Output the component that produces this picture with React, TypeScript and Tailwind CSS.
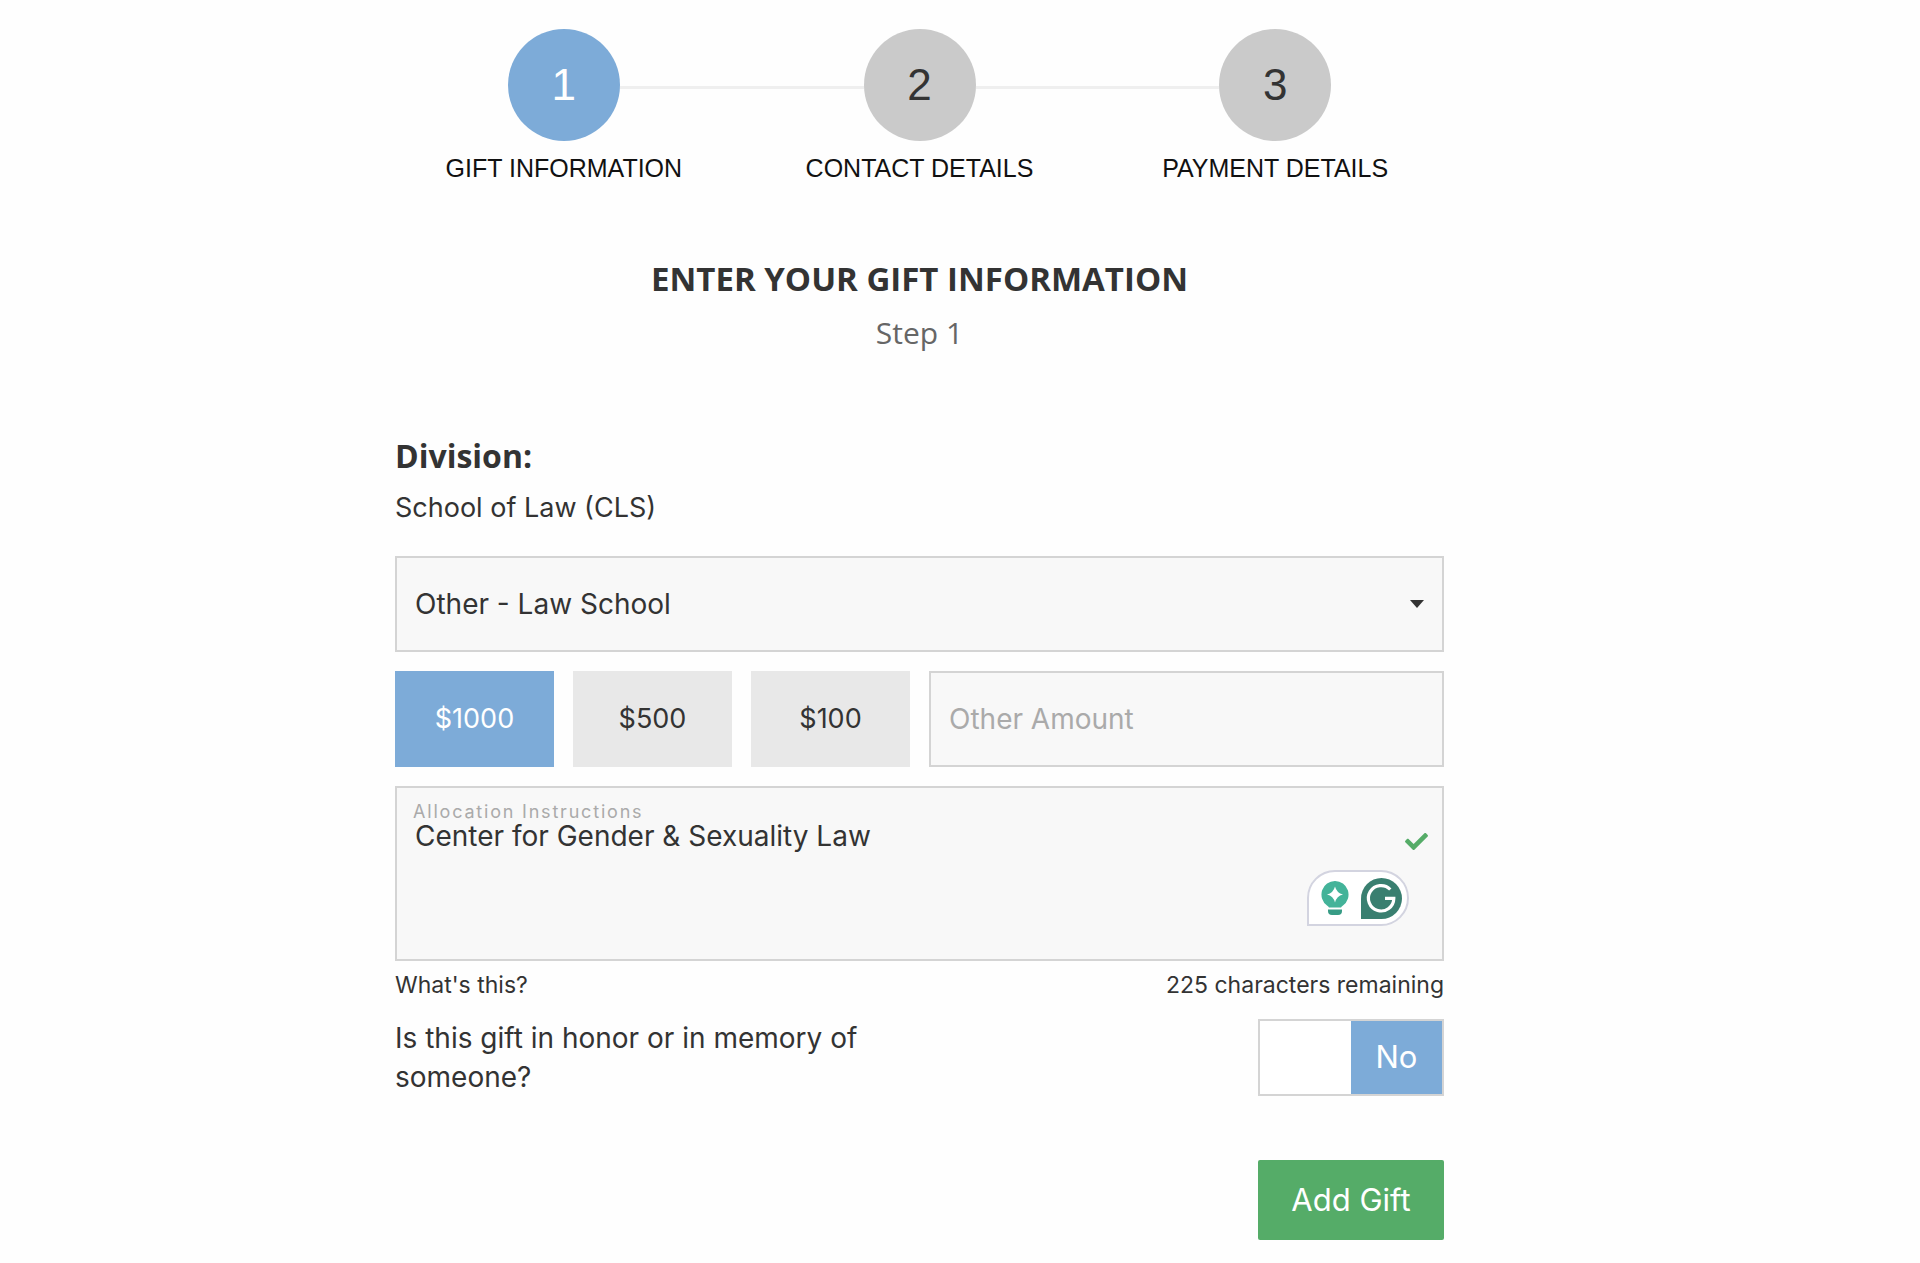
import { useState } from "react";
import { FaCheck } from "react-icons/fa";

const steps = ["Gift Information", "Contact Details", "Payment Details"];
const amounts = [1000, 500, 100];

const StepBar = ({ current }: { current: number }) => {
  return (
    <ol className="-mx-[9px] grid grid-cols-3 font-['Liberation_Sans',sans-serif]">
      {steps.map((step, i) => (
        <li key={step} className="flex flex-col items-center">
          <div className="flex w-full items-center">
            <span
              className={
                i === 0 ? "flex-1" : "mt-1 h-[3px] flex-1 bg-[#efefef]"
              }
            />
            <span
              className={
                i + 1 === current
                  ? "flex size-28 items-center justify-center rounded-full bg-[#7dabd8] text-[44px] text-white"
                  : "flex size-28 items-center justify-center rounded-full bg-[#cacaca] text-[44px] text-[#333]"
              }
            >
              {i + 1}
            </span>
            <span
              className={
                i === steps.length - 1
                  ? "flex-1"
                  : "mt-1 h-[3px] flex-1 bg-[#efefef]"
              }
            />
          </div>
          <span className="mt-[11px] text-[25px] leading-8 text-[#111] uppercase">
            {step}
          </span>
        </li>
      ))}
    </ol>
  );
};

const AssistantBadge = () => {
  return (
    <div className="absolute right-[33px] bottom-[33px] flex h-[56px] w-[102px] items-center justify-center gap-3 rounded-full rounded-bl-none border-2 border-[#d3d4e0] bg-white pl-[6px]">
      <svg viewBox="0 0 28 34" className="h-[34px] w-[28px]">
        <path
          d="M14 0a13.500 13.500 0 0 1 8 24.400q-1.500 1-2 2.100H8q-.5-1.100-2-2.100A13.500 13.500 0 0 1 14 0z"
          fill="#43b399"
        />
        <path d="M7 28.500h14v1.500q0 4-4 4h-6q-4 0-4-4z" fill="#379c85" />
        <path
          d="M14 5.500q1.600 6.400 8 8q-6.400 1.600-8 8q-1.600-6.400-8-8q6.400-1.600 8-8z"
          fill="#fff"
        />
      </svg>
      <svg viewBox="0 0 41 41" className="size-[41px]">
        <path
          d="M20.500 0A20.500 20.500 0 0 1 20.500 41H0V20.500A20.500 20.500 0 0 1 20.500 0z"
          fill="#397f70"
        />
        <path
          d="M29.300 11.500A12.700 12.700 0 1 0 32.800 20.400H24"
          fill="none"
          stroke="#fff"
          strokeWidth="3.200"
        />
      </svg>
    </div>
  );
};

const App = () => {
  const [amount, setAmount] = useState(1000);
  const [honor, setHonor] = useState(false);

  return (
    <div className="min-h-screen bg-[#fefefe] pr-[81px] font-['Inter',sans-serif] text-[28px] text-[#333]">
      <main className="mx-auto max-w-[1049px] pt-[29px]">
        <StepBar current={1} />

        <div className="mt-[70px] text-center font-['Open_Sans',sans-serif]">
          <h1 className="text-[33px] leading-[50px] font-bold">
            ENTER YOUR GIFT INFORMATION
          </h1>
          <p className="mt-1 text-[30px] leading-[50px] text-[#666]">Step 1</p>
        </div>

        <form className="mt-[73px]" onSubmit={(e) => e.preventDefault()}>
          <h2 className="font-['Open_Sans',sans-serif] text-[32px] leading-[50px] font-bold">
            Division:
          </h2>
          <p className="mt-[2px] text-[27px] leading-[50px]">
            School of Law (CLS)
          </p>

          <div className="relative mt-[23px]">
            <select
              aria-label="Fund"
              className="block h-24 w-full appearance-none border-2 border-[#d4d4d4] bg-[#f8f8f8] px-[18px]"
            >
              <option>Other - Law School</option>
            </select>
            <svg
              viewBox="0 0 14 8"
              className="pointer-events-none absolute top-11 right-5 h-2 w-[14px]"
            >
              <path d="M0 0h14L7 8z" fill="#333" />
            </svg>
          </div>

          <div className="mt-[19px] flex gap-[19px]">
            {amounts.map((value) => (
              <button
                key={value}
                type="button"
                onClick={() => setAmount(value)}
                className={
                  value === amount
                    ? "h-24 w-[159px] bg-[#7dabd8] text-[27px] text-white"
                    : "h-24 w-[159px] bg-[#e8e8e8] text-[27px]"
                }
              >
                ${value}
              </button>
            ))}
            <input
              type="text"
              aria-label="Other Amount"
              placeholder="Other Amount"
              className="h-24 min-w-0 flex-1 border-2 border-[#d4d4d4] bg-[#f8f8f8] px-[18px] placeholder:text-[#aaa]"
            />
          </div>

          <div className="relative mt-[19px] border-2 border-[#d4d4d4] bg-[#f8f8f8] px-4 pt-3">
            <label
              htmlFor="allocation"
              className="block text-[18px] leading-6 tracking-widest text-[#aaa]"
            >
              Allocation Instructions
            </label>
            <textarea
              id="allocation"
              defaultValue="Center for Gender & Sexuality Law"
              className="block h-[135px] w-full resize-none bg-transparent px-[2px] leading-6 outline-none"
            />
            <FaCheck className="absolute top-[42px] right-[14px] size-[23px] text-[#55ac68]" />
            <AssistantBadge />
          </div>

          <div className="mt-2 flex justify-between text-[23px] leading-8">
            <a href="#allocation">What's this?</a>
            <span>225 characters remaining</span>
          </div>

          <div className="mt-[18px] flex items-start justify-between">
            <span id="honor-label" className="w-[500px] leading-[39px]">
              Is this gift in honor or in memory of someone?
            </span>
            <button
              type="button"
              role="switch"
              aria-checked={honor}
              aria-labelledby="honor-label"
              onClick={() => setHonor(!honor)}
              className="grid h-[77px] w-[186px] grid-cols-2 border-2 border-[#d4d4d4] bg-white text-[31px] text-white"
            >
              <span
                className={
                  honor
                    ? "flex h-full items-center justify-center bg-[#7dabd8]"
                    : "hidden"
                }
              >
                Yes
              </span>
              <span
                className={
                  honor
                    ? "hidden"
                    : "col-start-2 flex h-full items-center justify-center bg-[#7dabd8]"
                }
              >
                No
              </span>
            </button>
          </div>

          <div className="mt-[63px] flex justify-end pb-5">
            <button
              type="submit"
              className="h-20 w-[186px] rounded-xs bg-[#55ac68] text-[31px] text-white"
            >
              Add Gift
            </button>
          </div>
        </form>
      </main>
    </div>
  );
};

export default App;
